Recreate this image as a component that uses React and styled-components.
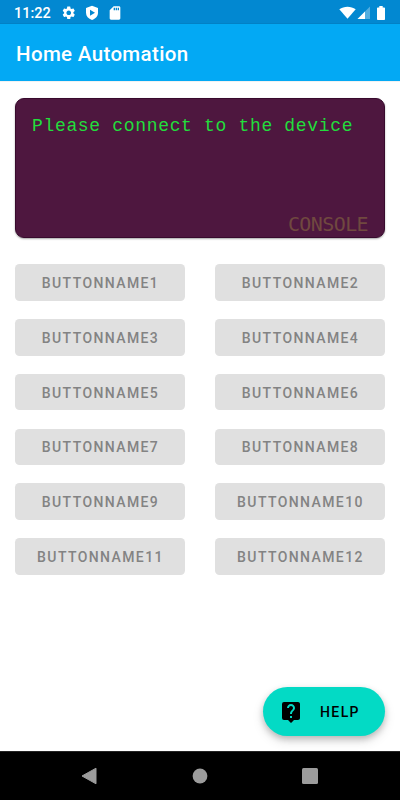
import styled, { createGlobalStyle } from 'styled-components';
import { MdLiveHelp, MdSdCard, MdSettings } from 'react-icons/md';

const GlobalStyle = createGlobalStyle`
  * {
    box-sizing: border-box;
  }

  body {
    margin: 0;
    background: #ffffff;
    font-family: Roboto, sans-serif;
  }
`;

const Screen = styled.div`
  display: flex;
  flex-direction: column;
  width: 400px;
  height: 800px;
  overflow: hidden;
  background: #ffffff;
`;

const StatusBar = styled.div`
  display: flex;
  flex: none;
  align-items: center;
  justify-content: space-between;
  height: 24px;
  padding: 1px 14px 0;
  background: #0288d1;
  color: #ffffff;
`;

const StatusGroup = styled.div`
  display: flex;
  align-items: center;
  height: 23px;

  svg {
    display: block;
    flex: none;
  }
`;

const Clock = styled.span`
  width: 47px;
  font-size: 14.5px;
  font-weight: 500;
  line-height: 22px;
  padding-top: 2px;
`;

const AppBar = styled.header`
  display: flex;
  flex: none;
  align-items: center;
  height: 57px;
  padding: 3px 16px 0;
  background: #03a9f4;
  box-shadow: 0 0 1px rgba(0, 0, 0, 0.3);
`;

const Title = styled.h1`
  margin: 0;
  color: #ffffff;
  font-size: 20.5px;
  font-weight: 500;
  letter-spacing: 0.35px;
`;

const Content = styled.main`
  display: flex;
  flex: 1;
  flex-direction: column;
  padding: 17px 15px 15px;
`;

const ConsoleCard = styled.section`
  display: flex;
  flex: none;
  flex-direction: column;
  justify-content: space-between;
  height: 140px;
  margin: 0 0.4px;
  padding: 16px 15.6px 2px;
  border: 1px solid #380a2d;
  border-radius: 9px;
  background: #4e173f;
  box-shadow: 0 1px 2px rgba(0, 0, 0, 0.35);
`;

const ConsoleText = styled.p`
  margin: 0;
  color: #22dd3c;
  font-family: 'Liberation Mono', monospace;
  font-size: 18px;
  letter-spacing: 0.67px;
  line-height: 22px;
  white-space: nowrap;
`;

const ConsoleLabel = styled.span`
  align-self: flex-end;
  color: #70493f;
  font-family: 'DejaVu Sans Mono', monospace;
  font-size: 20px;
  letter-spacing: -0.6px;
  line-height: 22px;
`;

const ButtonGrid = styled.div`
  display: grid;
  grid-template-columns: 1fr 1fr;
  gap: 18.05px 30px;
  margin-top: 26px;
`;

const DeviceButton = styled.button`
  height: 36.8px;
  padding: 1px 0 0 1px;
  border: 0;
  border-radius: 4.5px;
  background: #e0e0e0;
  color: #838383;
  font-family: inherit;
  font-size: 14px;
  font-weight: 500;
  letter-spacing: 1.4px;
  text-align: center;
`;

const HelpButton = styled.button`
  display: flex;
  align-items: center;
  align-self: flex-end;
  width: 122px;
  height: 49px;
  margin-top: auto;
  padding: 0 0 0 16px;
  border: 0;
  border-radius: 25px;
  background: #03dac5;
  box-shadow: 0 3px 6px rgba(0, 0, 0, 0.2), 0 5px 12px rgba(0, 0, 0, 0.12);
  color: #000000;

  svg {
    flex: none;
  }
`;

const HelpLabel = styled.span`
  margin-left: 17px;
  padding-top: 1px;
  font-family: Roboto, sans-serif;
  font-size: 14px;
  font-weight: 500;
  letter-spacing: 1.4px;
`;

const NavBar = styled.nav`
  display: flex;
  flex: none;
  align-items: center;
  justify-content: space-between;
  height: 49px;
  padding: 0 82px 0 81px;
  border-top: 1px solid #242424;
  background: #000000;

  svg {
    display: block;
  }
`;

const Gap = styled.span`
  width: ${({ $size }) => $size}px;
`;

const buttons = Array.from({ length: 12 }, (_, i) => `BUTTONNAME${i + 1}`);

function ShieldIcon() {
  return (
    <svg width="14" height="16" viewBox="0 0 14 16">
      <path
        fill="#fff"
        fillRule="evenodd"
        d="M7 .8 13 3v4.8c0 3.4-2.4 5.9-6 7.3-3.6-1.4-6-3.9-6-7.3V3zM5 4.8v6L10 7.8z"
      />
    </svg>
  );
}

function WifiIcon() {
  return (
    <svg width="17" height="14" viewBox="0 0 17 14">
      <path fill="#fff" d="M.3 3.3C5-.1 12-.1 16.7 3.3L8.5 12.7z" />
    </svg>
  );
}

function SignalIcon() {
  return (
    <svg width="13" height="14" viewBox="0 0 13 14">
      <path fill="#fff" fillOpacity="0.32" d="M13 .5V13H.5z" />
      <path fill="#fff" d="M8 5.5V13H.5z" />
    </svg>
  );
}

function BatteryIcon() {
  return (
    <svg width="8" height="14" viewBox="0 0 8 14">
      <path fill="#fff" d="M2.3 0h3.4v1.4h1.5q.8 0 .8.8v11q0 .8-.8.8H.8q-.8 0-.8-.8v-11q0-.8.8-.8h1.5z" />
    </svg>
  );
}

export default function App() {
  return (
    <>
      <GlobalStyle />
      <Screen>
        <StatusBar>
          <StatusGroup>
            <Clock>11:22</Clock>
            <MdSettings size={15.5} />
            <Gap $size={8} />
            <ShieldIcon />
            <Gap $size={8} />
            <MdSdCard size={16} />
          </StatusGroup>
          <StatusGroup>
            <WifiIcon />
            <Gap $size={1} />
            <SignalIcon />
            <Gap $size={7} />
            <BatteryIcon />
            <Gap $size={1} />
          </StatusGroup>
        </StatusBar>

        <AppBar>
          <Title>Home Automation</Title>
        </AppBar>

        <Content>
          <ConsoleCard>
            <ConsoleText>Please connect to the device</ConsoleText>
            <ConsoleLabel>CONSOLE</ConsoleLabel>
          </ConsoleCard>

          <ButtonGrid>
            {buttons.map((name) => (
              <DeviceButton key={name} disabled>
                {name}
              </DeviceButton>
            ))}
          </ButtonGrid>

          <HelpButton>
            <MdLiveHelp size={24} />
            <HelpLabel>HELP</HelpLabel>
          </HelpButton>
        </Content>

        <NavBar>
          <svg width="16" height="18" viewBox="0 0 16 18">
            <path fill="#9c9c9c" d="M15 1.2v15.6L1 9z" stroke="#9c9c9c" strokeLinejoin="round" />
          </svg>
          <svg width="16" height="16" viewBox="0 0 16 16">
            <circle cx="8" cy="8" r="7.4" fill="#9c9c9c" />
          </svg>
          <svg width="16" height="16" viewBox="0 0 16 16">
            <rect width="16" height="16" rx="1.5" fill="#9c9c9c" />
          </svg>
        </NavBar>
      </Screen>
    </>
  );
}
